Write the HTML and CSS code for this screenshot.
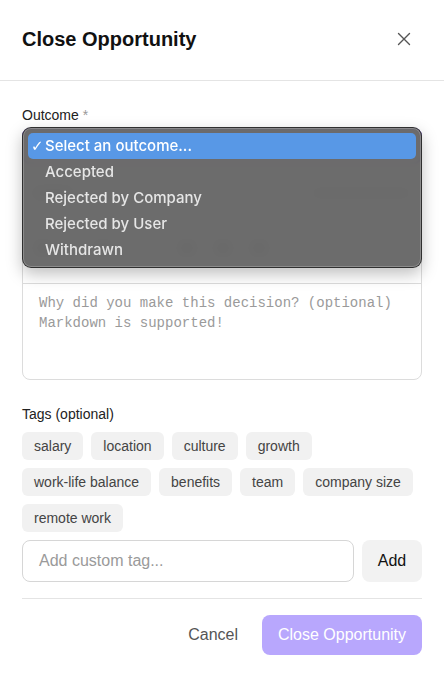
FILE: index.html
```html
<!DOCTYPE html>
<html lang="en">
<head>
<meta charset="utf-8">
<title>Close Opportunity</title>
<link rel="stylesheet" href="styles.css">
</head>
<body>
<div class="modal">
  <header class="modal-header">
    <h2 class="title">Close Opportunity</h2>
    <button class="close-btn" aria-label="Close">
      <svg width="14" height="14" viewBox="0 0 14 14"><path d="M1.5 1.5 L12.5 12.5 M12.5 1.5 L1.5 12.5" stroke="#555" stroke-width="1.4" stroke-linecap="round" fill="none"/></svg>
    </button>
  </header>

  <div class="modal-body">
    <label class="field-label">Outcome <span class="req">*</span></label>
    <div class="select-wrap">
      <div class="select"></div>
      <div class="popup">
        <div class="opt selected"><span class="check">✓</span>Select an outcome...</div>
        <div class="opt">Accepted</div>
        <div class="opt">Rejected by Company</div>
        <div class="opt">Rejected by User</div>
        <div class="opt">Withdrawn</div>
      </div>
    </div>

    <div class="editor">
      <div class="editor-tabs">
        <span class="tab"></span>
        <span class="dots"></span>
        <span class="hint"></span>
      </div>
      <div class="toolbar">
        <span class="tb"></span><span class="tb sm"></span><span class="tb"></span><span class="tb sm"></span><span class="tb sm"></span><span class="tb"></span><span class="tb"></span><span class="tb"></span><span class="tb sm"></span>
      </div>
      <div class="textarea">Why did you make this decision? (optional)<br>Markdown is supported!</div>
    </div>

    <label class="field-label tags-label">Tags (optional)</label>
    <div class="tags">
      <span class="tag">salary</span>
      <span class="tag">location</span>
      <span class="tag">culture</span>
      <span class="tag">growth</span>
      <span class="tag">work-life balance</span>
      <span class="tag">benefits</span>
      <span class="tag">team</span>
      <span class="tag">company size</span>
      <span class="tag">remote work</span>
    </div>

    <div class="custom-row">
      <div class="input">Add custom tag...</div>
      <button class="add-btn">Add</button>
    </div>

    <div class="footer">
      <button class="cancel-btn">Cancel</button>
      <button class="primary-btn">Close Opportunity</button>
    </div>
  </div>
</div>
</body>
</html>
```

FILE: styles.css
```css
* { box-sizing: border-box; }
html, body { margin: 0; padding: 0; background: #fff; }
body {
  font-family: "Liberation Sans", Arial, sans-serif;
  color: #222;
  width: 444px;
  height: 690px;
  overflow: hidden;
}
button { font-family: inherit; border: none; background: none; padding: 0; cursor: pointer; }

.modal-header {
  height: 81px;
  border-bottom: 1px solid #e4e4e4;
  display: flex;
  align-items: center;
  justify-content: space-between;
  padding: 0 33px 2px 22px;
}
.title {
  margin: 0;
  font-size: 20px;
  font-weight: 700;
  color: #111;
  line-height: 24px;
}
.close-btn { width: 14px; height: 14px; display: flex; }

.modal-body { padding: 0 22px; display: flex; flex-direction: column; }

.field-label {
  display: block;
  font-size: 14px;
  line-height: 17px;
  color: #222;
  margin-top: 26px;
  margin-bottom: 4px;
}
.req { color: #999; }

.select-wrap { position: relative; }
.select {
  height: 36px;
  border: 2px solid #6d3cf0;
  border-radius: 8px;
}
.popup {
  position: absolute;
  left: 0;
  right: 0;
  top: -1px;
  height: 141px;
  padding: 5px;
  border-radius: 9px;
  background: rgba(102, 102, 102, 0.96);
  backdrop-filter: blur(6px);
  border: 1px solid rgba(30, 30, 30, 0.75);
  box-shadow: inset 0 0 0 1px rgba(255,255,255,0.22), 0 6px 16px rgba(0,0,0,0.25);
  font-family: Inter, "Noto Sans", sans-serif;
  font-size: 15px;
  font-weight: 500;
  color: #e6e6e6;
  z-index: 5;
}
.opt {
  height: 26px;
  line-height: 26px;
  padding-left: 17px;
  position: relative;
  border-radius: 5px;
}
.opt.selected { background: #5898e6; color: #fff; }
.check {
  position: absolute;
  left: 3px;
  top: 0;
  font-size: 15px;
  font-family: "DejaVu Sans", sans-serif;
  font-weight: 400;
}

.editor {
  margin-top: 8px;
  border: 1px solid #dcdcdc;
  border-radius: 8px;
  height: 208px;
  display: flex;
  flex-direction: column;
}
.editor-tabs {
  height: 40px;
  display: flex;
  align-items: center;
  gap: 14px;
  padding: 0 10px;
}
.tab { width: 40px; height: 10px; background: #aaa; border-radius: 3px; }
.dots { width: 70px; height: 22px; background: radial-gradient(#ccc 1px, transparent 1px) 0 0 / 6px 6px; margin-left: 140px; }
.hint { margin-left: auto; width: 100px; height: 8px; background: #bbb; border-radius: 3px; }
.toolbar {
  height: 71px;
  display: flex;
  align-items: center;
  gap: 20px;
  padding: 0 12px;
  border-bottom: 1px solid #dcdcdc;
}
.tb { width: 16px; height: 12px; border-radius: 4px; background: #999; }
.tb.sm { width: 4px; }
.textarea {
  flex: 1;
  padding: 9px 16px;
  font-family: "Liberation Mono", "DejaVu Sans Mono", monospace;
  font-size: 14px;
  line-height: 20px;
  color: #9a9a9a;
}

.tags-label { margin-top: 26px; margin-bottom: 9px; }
.tags { display: flex; flex-wrap: wrap; gap: 8px; }
.tag {
  height: 28px;
  line-height: 28px;
  padding: 0 12px;
  background: #f1f1f1;
  border-radius: 6px;
  font-size: 14px;
  color: #444;
}

.custom-row { display: flex; gap: 8px; margin-top: 8px; }
.input {
  flex: 1;
  height: 42px;
  border: 1px solid #d6d6d6;
  border-radius: 8px;
  padding: 0 16px;
  font-size: 16px;
  line-height: 40px;
  color: #9a9a9a;
}
.add-btn {
  width: 60px;
  height: 42px;
  background: #f2f2f2;
  border-radius: 8px;
  font-size: 16px;
  color: #111;
}

.footer {
  margin-top: 16px;
  border-top: 1px solid #e4e4e4;
  padding-top: 16px;
  display: flex;
  justify-content: flex-end;
  gap: 8px;
}
.cancel-btn {
  height: 40px;
  padding: 0 16px;
  font-size: 16px;
  color: #555;
}
.primary-btn {
  height: 40px;
  width: 160px;
  background: #b8a7fd;
  border-radius: 8px;
  font-size: 16px;
  color: #fff;
}
```
